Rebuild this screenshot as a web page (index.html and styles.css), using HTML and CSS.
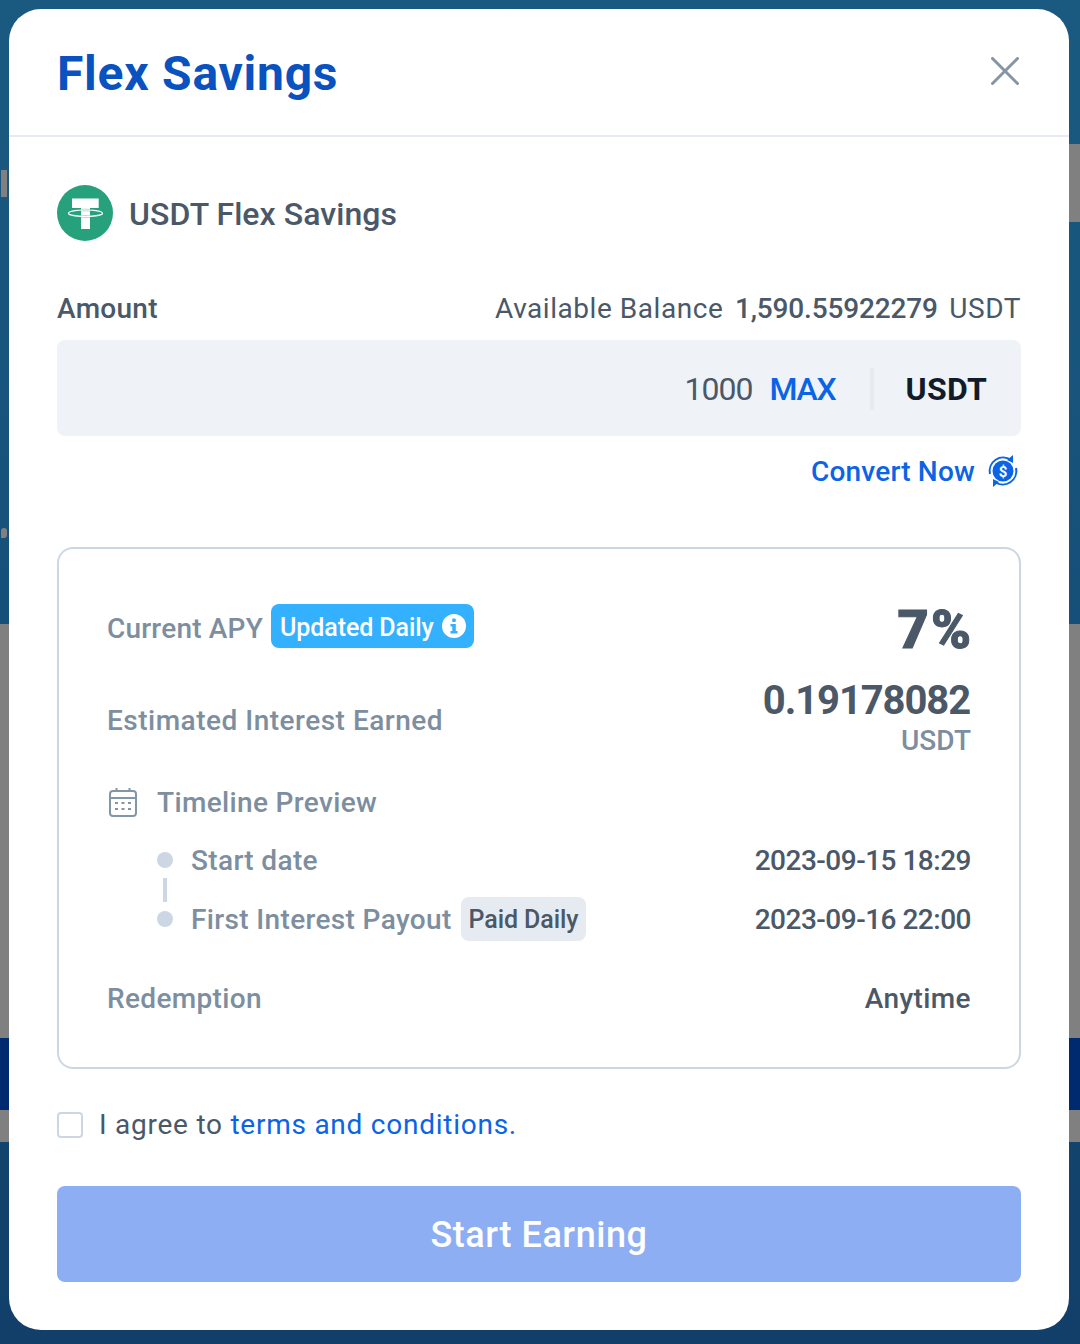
FILE: index.html
```html
<!DOCTYPE html>
<html>
<head>
  <title>Flex Savings</title>
  <link rel="stylesheet" href="styles.css">
</head>
<body>

  <div class="backdrop">
    <div class="stripe stripe-right"></div>
    <div class="stripe stripe-grey"></div>
    <div class="stripe stripe-band"></div>
    <div class="stripe stripe-low"></div>
    <div class="bg-letter"></div>
    <div class="bg-comma"></div>
  </div>

  <div class="modal">
    <div class="modal-header">
      <h1 class="modal-title">Flex Savings</h1>
      <svg class="close-icon" width="28" height="28" viewBox="0 0 28 28">
        <path d="M1.5 1.5 L26.5 26.5 M26.5 1.5 L1.5 26.5" stroke="#8496a6" stroke-width="3" fill="none" stroke-linecap="round"/>
      </svg>
    </div>

    <div class="modal-body">
      <div class="product">
        <svg class="coin" width="56" height="56" viewBox="0 0 56 56">
          <circle cx="28" cy="28" r="28" fill="#26a17b"/>
          <path d="M15 13.6 H41.7 V23 H33 V44 H24 V23 H15 Z" fill="#fff"/>
          <ellipse cx="28.5" cy="28.2" rx="17" ry="3.2" fill="none" stroke="#26a17b" stroke-opacity="0.45" stroke-width="2.6"/>
          <ellipse cx="28.5" cy="28.2" rx="17" ry="3.2" fill="none" stroke="#fff" stroke-width="1.2"/>
        </svg>
        <span class="product-name">USDT Flex Savings</span>
      </div>

      <div class="amount-head">
        <span class="amount-label">Amount</span>
        <span class="balance">Available Balance <b>1,590.55922279</b> USDT</span>
      </div>

      <div class="amount-input">
        <span class="amount-value">1000</span>
        <span class="max">MAX</span>
        <span class="divider"></span>
        <span class="currency">USDT</span>
      </div>

      <div class="convert">
        <a class="convert-link">Convert Now</a>
        <svg width="32" height="34" viewBox="0 0 32 34">
          <circle cx="16" cy="17" r="10.5" fill="#0b63e5"/>
          <path d="M3 20 A13.5 13.5 0 0 1 24 6" fill="none" stroke="#0b63e5" stroke-width="2"/>
          <path d="M29 14 A13.5 13.5 0 0 1 8 28" fill="none" stroke="#0b63e5" stroke-width="2"/>
          <path d="M26 1 L26 9 L20 6 Z" fill="#0b63e5"/>
          <path d="M6 33 L6 25 L12 28 Z" fill="#0b63e5"/>
          <text x="16" y="22.5" class="dollar">$</text>
        </svg>
      </div>

      <div class="details">
        <div class="row row-apy">
          <div class="label-group">
            <span class="label label-apy">Current APY</span>
            <span class="badge-blue">Updated Daily
              <svg width="24" height="24" viewBox="0 0 24 24">
                <circle cx="12" cy="12" r="12" fill="#fff"/>
                <rect x="10.2" y="4.5" width="3.6" height="3.4" rx="1" fill="#33b1ff"/>
                <path d="M8.5 10 H13.8 V17 H15.5 V19.5 H8.5 V17 H10.3 V12.5 H8.5 Z" fill="#33b1ff"/>
              </svg>
            </span>
          </div>
          <span class="apy-value">7%</span>
        </div>

        <div class="row row-interest">
          <span class="label label-interest">Estimated Interest Earned</span>
          <div class="interest">
            <div class="interest-value">0.19178082</div>
            <div class="interest-unit">USDT</div>
          </div>
        </div>

        <div class="timeline-head">
          <svg width="30" height="30" viewBox="0 0 30 30" fill="none" stroke="#8496a6" stroke-width="2">
            <rect x="2" y="4" width="26" height="25" rx="3"/>
            <path d="M2 11 H28 M8.5 1 V5 M21.5 1 V5"/>
            <path d="M7 16 H10 M13.5 16 H16.5 M20 16 H23 M7 22 H10 M13.5 22 H16.5 M20 22 H23"/>
          </svg>
          <span class="label">Timeline Preview</span>
        </div>

        <div class="row timeline-row">
          <div class="label-group">
            <span class="dot"></span>
            <span class="label">Start date</span>
          </div>
          <span class="date">2023-09-15 18:29</span>
        </div>
        <div class="line"></div>
        <div class="row timeline-row">
          <div class="label-group">
            <span class="dot"></span>
            <span class="label">First Interest Payout</span>
            <span class="badge-grey">Paid Daily</span>
          </div>
          <span class="date">2023-09-16 22:00</span>
        </div>

        <div class="row row-redemption">
          <span class="label">Redemption</span>
          <span class="anytime">Anytime</span>
        </div>
      </div>

      <div class="agree">
        <span class="checkbox"></span>
        <span class="agree-text">I agree to <a>terms and conditions.</a></span>
      </div>

      <button class="submit">Start Earning</button>
    </div>
  </div>

</body>
</html>
```

FILE: styles.css
```css
* {
  box-sizing: border-box;
}

body {
  margin: 0;
  height: 1344px;
  overflow: hidden;
  font-family: "Roboto", "Liberation Sans", sans-serif;
  background: #164a73;
}

/* page behind the modal, only the edges show */
.backdrop {
  position: absolute;
  inset: 0;
  overflow: hidden;
  background: linear-gradient(#1a5a80, #164f79 50%, #113f69);
}

.stripe {
  position: absolute;
  left: 0;
  right: 0;
  background: #808080;
}

.stripe-right {
  top: 144px;
  left: 1060px;
  height: 78px;
}

.stripe-grey {
  top: 624px;
  height: 414px;
}

.stripe-band {
  top: 1038px;
  height: 72px;
  background: #002a70;
}

.stripe-low {
  top: 1110px;
  height: 32px;
}

.bg-letter {
  position: absolute;
  left: 1px;
  top: 170px;
  width: 6px;
  height: 27px;
  background: #808080;
}

.bg-comma {
  position: absolute;
  left: 1px;
  top: 528px;
  width: 6px;
  height: 10px;
  border-radius: 3px 3px 3px 0;
  background: #808080;
}

.modal {
  position: absolute;
  left: 9px;
  top: 9px;
  width: 1060px;
  height: 1321px;
  background: #fff;
  border-radius: 32px;
}

.modal-header {
  height: 128px;
  border-bottom: 2px solid #e5ebf1;
  padding: 0 48px;
  display: flex;
  justify-content: space-between;
  align-items: center;
}

.modal-title {
  margin: 2px 0 0;
  font-size: 48px;
  font-weight: 700;
  letter-spacing: 0.75px;
  color: #0a52bf;
}

.close-icon {
  margin-right: 2px;
  margin-bottom: 2px;
}

.modal-body {
  padding: 48px 48px 0;
}

.product {
  display: flex;
  align-items: center;
  gap: 16px;
  height: 56px;
}

.product-name {
  margin-top: 2px;
  font-size: 32px;
  font-weight: 500;
  letter-spacing: 0.06px;
  color: #4a5868;
}

.amount-head {
  display: flex;
  justify-content: space-between;
  align-items: center;
  margin-top: 47px;
  height: 40px;
}

.amount-label {
  font-size: 28px;
  font-weight: 500;
  letter-spacing: 0.3px;
  color: #4a5868;
}

.balance {
  font-size: 28px;
  letter-spacing: 0.55px;
  color: #4a5868;
}

.balance b {
  font-weight: 500;
  letter-spacing: -0.15px;
  margin: 0 4px;
}

.amount-input {
  margin-top: 12px;
  height: 96px;
  background: #eff3f8;
  border-radius: 8px;
  display: flex;
  justify-content: flex-end;
  align-items: center;
  padding: 2px 34px 0 0;
  font-size: 32px;
}

.amount-value {
  letter-spacing: -1px;
  color: #4a5868;
}

.max {
  margin-left: 17px;
  font-weight: 500;
  letter-spacing: -1.2px;
  color: #0b63e5;
}

.divider {
  width: 4px;
  height: 42px;
  background: #e5ebf1;
  margin: 0 32px 0 34px;
}

.currency {
  font-weight: 700;
  letter-spacing: 0.25px;
  color: #121b2a;
}

.convert {
  display: flex;
  justify-content: flex-end;
  align-items: center;
  gap: 12px;
  margin-top: 17px;
  height: 36px;
  padding-right: 2px;
}

.convert-link {
  font-size: 28px;
  font-weight: 500;
  letter-spacing: 0.2px;
  color: #0b63e5;
}

.dollar {
  font-size: 15px;
  font-weight: 700;
  fill: #fff;
  text-anchor: middle;
}

.details {
  margin-top: 58px;
  height: 522px;
  border: 2px solid #cdd7e3;
  border-radius: 16px;
  padding: 55px 48px 0;
}

.row {
  display: flex;
  justify-content: space-between;
  align-items: center;
}

.label-group {
  display: flex;
  align-items: center;
}

.label {
  font-size: 28px;
  font-weight: 500;
  letter-spacing: 0.35px;
  color: #7d8e9f;
}

.label-apy {
  letter-spacing: 0.2px;
}

.label-interest {
  padding-top: 10px;
  letter-spacing: 0.5px;
}

.badge-blue {
  display: flex;
  align-items: center;
  gap: 8px;
  margin: -4px 0 0 8px;
  height: 44px;
  padding: 2px 8px 0 9px;
  border-radius: 8px;
  background: #33b1ff;
  color: #fff;
  font-size: 25px;
  font-weight: 500;
  letter-spacing: -0.08px;
}

.badge-blue svg {
  margin-top: -2px;
}

.apy-value {
  margin-right: -2px;
  padding-top: 2px;
  font-size: 54px;
  font-weight: 900;
  letter-spacing: 2px;
  -webkit-text-stroke: 1px #4a5868;
  color: #4a5868;
}

.row-apy {
  height: 48px;
}

.row-interest {
  margin-top: 23px;
}

.interest {
  text-align: right;
}

.interest-value {
  margin-right: 1px;
  font-size: 40px;
  font-weight: 700;
  line-height: 52px;
  letter-spacing: -1.1px;
  color: #4a5868;
}

.interest-unit {
  font-size: 28px;
  font-weight: 500;
  line-height: 28px;
  color: #7d8e9f;
}

.timeline-head {
  display: flex;
  align-items: center;
  gap: 19px;
  margin-top: 31px;
  height: 32px;
  padding-left: 1px;
}

.timeline-row {
  height: 36px;
  padding-left: 50px;
}

.timeline-head + .timeline-row {
  margin-top: 24px;
}

.dot {
  width: 16px;
  height: 16px;
  border-radius: 50%;
  background: #cdd7e3;
  margin-right: 18px;
}

.line {
  width: 4px;
  height: 24px;
  margin: 0 0 -1px 56px;
  background: #cdd7e3;
}

.date {
  font-size: 28px;
  font-weight: 500;
  letter-spacing: -0.5px;
  color: #4a5868;
}

.anytime {
  font-size: 28px;
  font-weight: 500;
  letter-spacing: 0.4px;
  color: #4a5868;
}

.badge-grey {
  margin-left: 9px;
  height: 44px;
  line-height: 46px;
  padding: 0 8px;
  border-radius: 8px;
  background: #e5ebf1;
  color: #4a5868;
  font-size: 25px;
  font-weight: 500;
  letter-spacing: -0.1px;
}

.row-redemption {
  margin-top: 45px;
}

.agree {
  display: flex;
  align-items: center;
  gap: 16px;
  margin-top: 40px;
  height: 32px;
}

.checkbox {
  width: 26px;
  height: 26px;
  border: 2px solid #cdd7e3;
  border-radius: 4px;
}

.agree-text {
  margin-top: -2px;
  font-size: 28px;
  letter-spacing: 0.75px;
  color: #4a5868;
}

.agree-text a {
  color: #0b63e5;
}

.submit {
  display: block;
  width: 100%;
  height: 96px;
  margin-top: 45px;
  padding-top: 3px;
  border: none;
  border-radius: 8px;
  background: #8daef3;
  color: #fff;
  font-family: inherit;
  font-size: 36px;
  font-weight: 500;
  letter-spacing: 0.55px;
}
```
